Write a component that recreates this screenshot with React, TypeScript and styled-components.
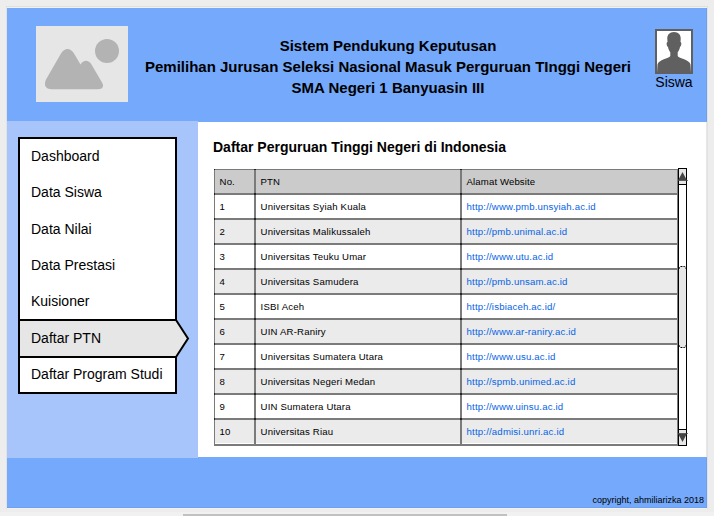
import React from 'react';
import styled, { createGlobalStyle } from 'styled-components';

const Global = createGlobalStyle`
  * { box-sizing: border-box; }
  html, body { margin: 0; padding: 0; }
  body {
    background: #ededed;
    color: #000;
    font-family: "Liberation Sans", Arial, sans-serif;
    overflow: hidden;
  }
`;

const Screen = styled.div`
  width: 714px;
  height: 516px;
  display: flex;
  flex-direction: column;
  padding: 6px 6px 0;
`;

const Frame = styled.main`
  width: 702px;
  height: 503px;
  border: 1px solid #e2e2e2;
  border-top-color: #dfe1de;
  border-bottom: 0;
  padding-top: 1px;
  background: #f3f1ec;
  display: flex;
  flex-direction: column;
`;

const Header = styled.header`
  height: 113px;
  flex: none;
  display: grid;
  grid-template-columns: 29px 92px 1fr 38px 14px;
  background: #74a9fb;
  box-shadow: inset -1px 0 #6da0ee;
`;

const Logo = styled.svg`
  grid-column: 2;
  width: 92px;
  height: 76px;
  margin-top: 18px;
`;

const Title = styled.h1`
  margin: 27px 0 0;
  padding-right: 7px;
  font-size: 15px;
  line-height: 21px;
  font-weight: bold;
  text-align: center;
  white-space: nowrap;
`;

const User = styled.div`
  padding-top: 21px;
  font-size: 14px;
  line-height: 17px;
  text-align: center;
`;

const Avatar = styled.svg`
  display: block;
  width: 38px;
  height: 45px;
`;

const Body = styled.div`
  height: 337px;
  flex: none;
  display: flex;
`;

const Sidebar = styled.aside`
  width: 191px;
  height: 337px;
  padding: 16px 0 0 11px;
  background: #a7c5fb;
`;

const Menu = styled.nav`
  width: 159px;
  height: 257px;
  border: 2px solid #000;
  background: #fff;
`;

const MenuItem = styled.div<{ $height: number; $active?: boolean }>`
  position: relative;
  height: ${p => p.$height}px;
  padding-left: 11px;
  display: flex;
  align-items: center;
  font-size: 14px;
  white-space: nowrap;
  background: ${p => (p.$active ? '#e6e6e6' : '#fff')};
  box-shadow: ${p => (p.$active ? 'inset 0 2px #000, inset 0 -2px #000' : 'none')};

  &:nth-last-child(-n + 2) {
    padding-bottom: 2px;
  }
`;

const Pointer = styled.svg`
  position: absolute;
  left: 154px;
  top: 0;
  width: 16px;
  height: 39px;
`;

const Content = styled.section`
  flex: 1;
  padding: 1px 0 1px;
  background: #74a9fb;
`;

const Panel = styled.div`
  height: 335px;
  padding: 16px 0 0 15px;
  background: #fff;
  box-shadow: inset -1px 0 #e6e6e6;
`;

const Heading = styled.h2`
  margin: 0;
  height: 30px;
  font-size: 14px;
  line-height: 18px;
  font-weight: bold;
`;

const TableArea = styled.div`
  display: flex;
  padding-left: 1px;
  align-items: flex-end;
`;

const Table = styled.div`
  width: 464px;
  height: 277px;
  border-bottom: 2px solid #7b7b7b;
  border-right: 1px solid #7b7b7b;
`;

const Row = styled.div<{ $kind: 'head' | 'plain' | 'shade' }>`
  height: ${p => (p.$kind === 'head' ? 24 : 25)}px;
  border-top: ${p => (p.$kind === 'head' ? 1 : 2)}px solid #7b7b7b;
  display: grid;
  grid-template-columns: 40px 206px 1fr;
  letter-spacing: ${p => (p.$kind === 'head' ? 0.12 : 0.18)}px;
  background: ${p => ({ head: '#cbcbcb', plain: '#fff', shade: '#ebebeb' })[p.$kind]};
`;

const Cell = styled.div<{ $first?: boolean; $link?: boolean }>`
  position: relative;
  border-left: ${p => (p.$first ? 1 : 2)}px solid #7b7b7b;
  padding-left: 4.6px;
  font-size: 9.6px;
  line-height: 24px;
  white-space: nowrap;
  color: ${p => (p.$link ? '#0563e5' : '#000')};

  /* darker joint where grid lines cross */
  &::before {
    content: '';
    position: absolute;
    left: ${p => (p.$first ? -1 : -2)}px;
    top: -2px;
    width: ${p => (p.$first ? 1 : 2)}px;
    height: 2px;
    background: #222;
  }

  ${Row}:first-child > &::before {
    top: -1px;
    height: 1px;
  }
`;

const Scrollbar = styled.svg`
  width: 11px;
  height: 278px;
`;

const Footer = styled.footer`
  height: 50px;
  flex: none;
  display: flex;
  justify-content: flex-end;
  align-items: flex-end;
  padding: 0 3px 2px 0;
  font-size: 9px;
  line-height: 12px;
  background: #74a9fb;
  box-shadow: inset -1px -1px #6da0ee;
`;

const BottomStrip = styled.div`
  margin: 3px -6px 0;
  height: 4px;
  padding: 2px 0 0 183px;
  background: #f1f1f1;
`;

const BottomThumb = styled.div`
  width: 324px;
  height: 2px;
  background: #c1c1c1;
`;

const menu = [
  { label: 'Dashboard', height: 34 },
  { label: 'Data Siswa', height: 37 },
  { label: 'Data Nilai', height: 37 },
  { label: 'Data Prestasi', height: 36 },
  { label: 'Kuisioner', height: 36 },
  { label: 'Daftar PTN', height: 39, active: true },
  { label: 'Daftar Program Studi', height: 34 },
];

const universities = [
  ['Universitas Syiah Kuala', 'http://www.pmb.unsyiah.ac.id'],
  ['Universitas Malikussaleh', 'http://pmb.unimal.ac.id'],
  ['Universitas Teuku Umar', 'http://www.utu.ac.id'],
  ['Universitas Samudera', 'http://pmb.unsam.ac.id'],
  ['ISBI Aceh', 'http://isbiaceh.ac.id/'],
  ['UIN AR-Raniry', 'http://www.ar-raniry.ac.id'],
  ['Universitas Sumatera Utara', 'http://www.usu.ac.id'],
  ['Universitas Negeri Medan', 'http://spmb.unimed.ac.id'],
  ['UIN Sumatera Utara', 'http://www.uinsu.ac.id'],
  ['Universitas Riau', 'http://admisi.unri.ac.id'],
];

export default function App() {
  return (
    <Screen>
      <Global />
      <Frame>
        <Header>
          <Logo viewBox="0 0 92 76">
            <rect width="92" height="76" fill="#e6e6e6" />
            <circle cx="71" cy="25" r="12" fill="#b3b3b3" />
            <path
              d="M10 53.5 L25 27.5 C28.5 21.5 34.5 21.5 38 27.5 L44.5 38.5 C47.5 33.5 52.5 33.5 55.5 38.5 L66 56.5 C68.5 60.5 66.5 63.2 62 63.2 H15.500 C9.500 63.2 7.500 59 10 53.5 Z"
              fill="#b3b3b3"
            />
          </Logo>
          <Title>
            Sistem Pendukung Keputusan
            <br />
            Pemilihan Jurusan Seleksi Nasional Masuk Perguruan TInggi Negeri
            <br />
            SMA Negeri 1 Banyuasin III
          </Title>
          <User>
            <Avatar viewBox="0 0 38 45">
              <rect x="1" y="1" width="36" height="43" fill="#fff" stroke="#606060" strokeWidth="2" />
              <path
                d="M19 3 C14.5 3 12 6 12.3 10 L12.500 13 C11.200 13 11.400 17 13 18 C13.500 20.500 14.300 22 15.300 23.200 V27 C14 29.500 3.500 30.500 2.500 35.500 L2 44 H36 L35.500 35.500 C34.500 30.500 24 29.500 22.700 27 V23.200 C23.700 22 24.500 20.500 25 18 C26.600 17 26.800 13 25.500 13 L25.700 10 C26 6 23.500 3 19 3 Z"
                fill="#606060"
              />
            </Avatar>
            Siswa
          </User>
        </Header>
        <Body>
          <Sidebar>
            <Menu>
              {menu.map(item => (
                <MenuItem key={item.label} $height={item.height} $active={item.active}>
                  {item.label}
                  {item.active && (
                    <Pointer viewBox="0 0 16 39">
                      <path d="M0 2 H3 L14.500 19.500 L3 37 H0 Z" fill="#e6e6e6" />
                      <path d="M2 1 L14 19.500 L2 38" fill="none" stroke="#000" strokeWidth="2" />
                    </Pointer>
                  )}
                </MenuItem>
              ))}
            </Menu>
          </Sidebar>
          <Content>
            <Panel>
              <Heading>Daftar Perguruan Tinggi Negeri di Indonesia</Heading>
              <TableArea>
                <Table>
                  <Row $kind="head">
                    <Cell $first>No.</Cell>
                    <Cell>PTN</Cell>
                    <Cell>Alamat Website</Cell>
                  </Row>
                  {universities.map(([name, site], i) => (
                    <Row key={name} $kind={i % 2 ? 'shade' : 'plain'}>
                      <Cell $first>{i + 1}</Cell>
                      <Cell>{name}</Cell>
                      <Cell $link>{site}</Cell>
                    </Row>
                  ))}
                </Table>
                <Scrollbar viewBox="0 0 11 278">
                  <rect x="0.5" y="0.5" width="8" height="277" fill="#fff" stroke="#000" />
                  <rect x="1" y="1" width="7" height="15" fill="#e6e6e6" />
                  <path d="M1 16.500 H8" stroke="#000" />
                  <path d="M4.500 4 L9 12.500 H0 Z" fill="#444" />
                  <path d="M0 12.500 H10" stroke="#444" strokeOpacity="0.7" />
                  <path d="M1 101 Q1 98.500 3 98.500 H6 Q8 98.500 8 101 V177 Q8 179.500 6 179.500 H3 Q1 179.500 1 177 Z" fill="#e6e6e6" />
                  <path d="M1 101 Q1 98.500 3 98.500 H6 Q8 98.500 8 101 M1 177 Q1 179.500 3 179.500 H6 Q8 179.500 8 177" fill="none" stroke="#000" strokeDasharray="2 1" />
                  <rect x="1" y="262" width="7" height="15" fill="#e6e6e6" />
                  <path d="M1 261.500 H8" stroke="#000" />
                  <path d="M4.500 274 L9 265.500 H0 Z" fill="#444" />
                  <path d="M0 265.500 H10" stroke="#444" strokeOpacity="0.7" />
                </Scrollbar>
              </TableArea>
            </Panel>
          </Content>
        </Body>
        <Footer>copyright, ahmiliarizka 2018</Footer>
      </Frame>
      <BottomStrip>
        <BottomThumb />
      </BottomStrip>
    </Screen>
  );
}
